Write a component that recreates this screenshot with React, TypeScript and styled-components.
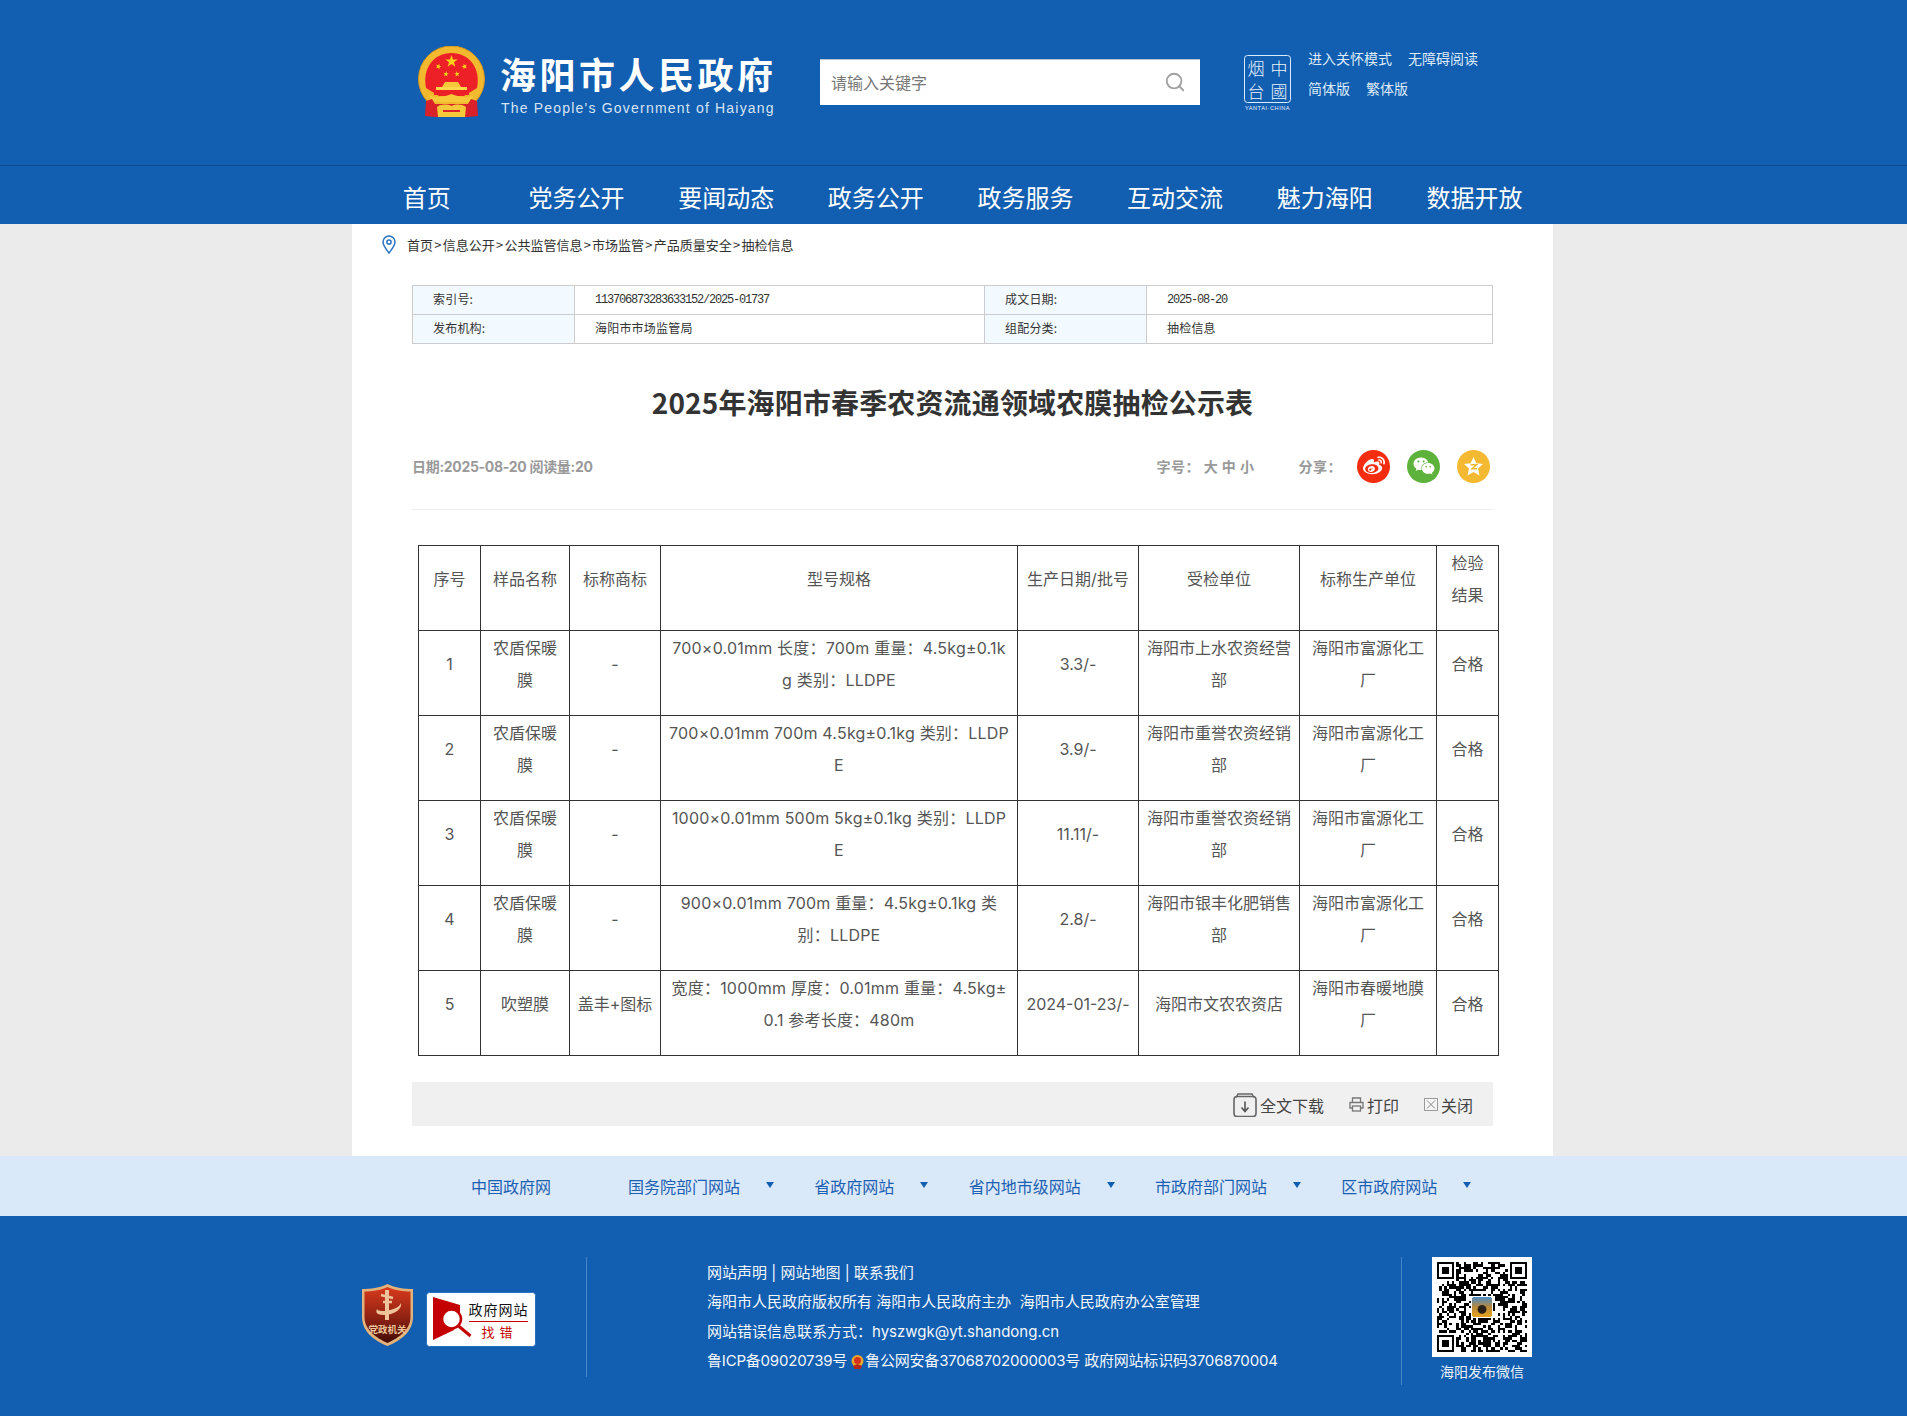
import * as React from "react";
import styled, { createGlobalStyle } from "styled-components";
import { Search } from "lucide-react";
import { FaWeibo, FaWeixin } from "react-icons/fa";

const BLUE = "#125eb0";
const CJK = `"Noto Sans CJK SC", "Liberation Sans", sans-serif`;
const MIXED = `Inter, "Noto Sans CJK SC", sans-serif`;

const GlobalStyle = createGlobalStyle`
  html, body { margin: 0; padding: 0; background: #ebebeb; }
  body { font-family: ${CJK}; color: #333; }
  * { box-sizing: border-box; }
  a { color: inherit; text-decoration: none; }
`;

const Wrap = styled.div`
  width: 1201px;
  margin-left: 352px;
`;

/* header */
const HeaderBar = styled.header`
  background: ${BLUE};
`;
const TopRow = styled(Wrap)`
  height: 165px;
  display: flex;
  align-items: flex-start;
  padding-left: 66px;
`;
const TopBorder = styled.div`
  border-bottom: 1px solid #0e4c95;
`;
const LogoGroup = styled.div`
  width: 402px;
  padding-top: 46px;
  display: flex;
`;
const LogoText = styled.div`
  margin-left: 15px;
  color: #fff;
`;
const LogoTitle = styled.div`
  font-size: 36px;
  font-weight: 700;
  letter-spacing: 3.5px;
  line-height: 44px;
  margin-top: 5px;
  white-space: nowrap;
`;
const LogoSub = styled.div`
  font-family: "Liberation Sans", sans-serif;
  font-size: 14px;
  line-height: 18px;
  margin: 4px 0 0 1px;
  letter-spacing: 1.2px;
  color: #d6e5f5;
  white-space: nowrap;
`;
const SearchBox = styled.div`
  width: 380px;
  height: 46px;
  margin-top: 59px;
  background: #fff;
  border-top: 1px solid #b9c4d2;
  display: flex;
  align-items: center;
  justify-content: space-between;
  padding: 0 14px 2px 11px;
  font-size: 16px;
  color: #777;
`;
const Seal = styled.svg`
  margin: 55px 0 0 44px;
  flex: none;
`;
const TopLinks = styled.div`
  margin: 47px 0 0 17px;
  display: grid;
  grid-auto-rows: 30px;
  font-size: 14px;
  line-height: 22px;
  color: #dcebfa;
  white-space: nowrap;
`;
const LinkPair = styled.div`
  display: flex;
  gap: 16px;
`;
const NavRow = styled(Wrap)`
  height: 58px;
  display: flex;
`;
const NavItem = styled.a`
  width: 149.66px;
  text-align: center;
  font-size: 24px;
  line-height: 50px;
  padding-top: 6px;
  color: #fff;
  white-space: nowrap;
`;

/* main */
const Main = styled(Wrap)`
  background: #fff;
  padding-bottom: 30px;
`;
const Crumbs = styled.div`
  height: 42px;
  padding: 10px 0 0 30px;
  display: flex;
  align-items: flex-start;
  font-size: 13px;
  line-height: 22px;
  color: #333;
  white-space: nowrap;
`;
const CrumbText = styled.span`
  margin-left: 11px;
`;
const Sep = styled.span`
  display: inline-block;
  width: 9.7px;
  text-align: center;
`;
const Content = styled.div`
  padding: 0 60px;
  margin-top: 19px;
`;
const InfoTable = styled.table`
  width: 1080px;
  border-collapse: collapse;
  table-layout: fixed;
  font-size: 12px;
`;
const InfoCell = styled.td<{ $label?: boolean; $mono?: boolean }>`
  height: 29px;
  border: 1px solid #ccc;
  padding: 0 0 3px 20px;
  color: #333;
  letter-spacing: 0.2px;
  background: ${(p) => (p.$label ? "#f3faff" : "#fff")};
  ${(p) =>
    p.$mono
      ? `font-family: "Liberation Mono", monospace; font-size: 12px; letter-spacing: -1.2px; padding-bottom: 1px;`
      : ""}
`;
const Title = styled.h1`
  margin: 38px 0 0;
  font-size: 28px;
  line-height: 40px;
  font-weight: 700;
  letter-spacing: 0.15px;
  text-align: center;
  color: #333;
`;
const MetaRow = styled.div`
  margin-top: 28px;
  padding-bottom: 27px;
  height: 60px;
  border-bottom: 1px solid #eee;
  display: flex;
  align-items: center;
  color: #999;
  font-weight: 700;
`;
const MetaLeft = styled.div`
  font-family: ${MIXED};
  font-size: 14px;
  letter-spacing: -0.3px;
  margin-right: auto;
`;
const MetaTool = styled.div<{ $gap: number }>`
  font-size: 14px;
  letter-spacing: 0.5px;
  margin-right: ${(p) => p.$gap}px;
  white-space: nowrap;
`;
const ShareIcon = styled.a<{ $bg: string }>`
  width: 33px;
  height: 33px;
  border-radius: 50%;
  background: ${(p) => p.$bg};
  color: #fff;
  display: flex;
  align-items: center;
  justify-content: center;
  margin-left: 17px;
  &:first-of-type { margin-left: 0; }
`;
const ShareEnd = styled.div`
  width: 3px;
`;
const DataTable = styled.table`
  width: 1080px;
  margin: 35px 0 0 6px;
  border-collapse: collapse;
  table-layout: fixed;
`;
const Cell = styled.td<{ $spec?: boolean }>`
  height: 85px;
  border: 1px solid #333;
  padding: 1px 5px 19px;
  font-family: ${MIXED};
  font-size: 16px;
  line-height: 32px;
  letter-spacing: ${(p) => (p.$spec ? "0.2px" : "0")};
  color: #555;
  text-align: center;
  vertical-align: middle;
  white-space: pre-line;
  word-break: break-all;
`;
const ActionBar = styled.div`
  margin-top: 26px;
  height: 44px;
  background: #f0f0f0;
  display: flex;
  align-items: center;
  justify-content: flex-end;
  padding: 1px 20px 0 0;
  font-size: 16px;
  color: #444;
`;
const Action = styled.a<{ $gap: number }>`
  display: flex;
  align-items: center;
  gap: 3px;
  margin-left: ${(p) => p.$gap}px;
`;

/* links band */
const Band = styled.div`
  background: #d9e9fa;
`;
const BandRow = styled(Wrap)`
  height: 60px;
  padding-left: 119px;
  display: flex;
  align-items: center;
  font-size: 16px;
  color: #1d60b0;
  white-space: nowrap;
`;
const BandLink = styled.a<{ $gap: number }>`
  display: flex;
  align-items: center;
  margin-right: ${(p) => p.$gap}px;
`;
const Caret = styled.i`
  width: 0;
  height: 0;
  margin: -3px 0 0 26px;
  border-style: solid;
  border-width: 6px 4px 0;
  border-color: #125eb0 transparent transparent;
`;

/* footer */
const FooterBar = styled.footer`
  background: ${BLUE};
  height: 200px;
`;
const FooterRow = styled(Wrap)`
  display: flex;
  align-items: flex-start;
  padding-top: 41px;
`;
const BadgeCol = styled.div`
  width: 235px;
  height: 120px;
  padding: 27px 0 0 10px;
  display: flex;
  align-items: flex-start;
  border-right: 1px solid #4a85c6;
`;
const ErrorBadge = styled.svg`
  margin: 8px 0 0 13px;
`;
const FootText = styled.div`
  width: 815px;
  height: 128px;
  padding: 1px 0 0 120px;
  border-right: 1px solid #4a85c6;
  font-family: ${MIXED};
  font-size: 15px;
  line-height: 29.3px;
  color: #f2f7fc;
  white-space: nowrap;
`;
const RecordLine = styled.div`
  letter-spacing: -0.2px;
`;
const PoliceIcon = styled.svg`
  vertical-align: -3px;
  margin: 0 1px 0 4px;
`;
const QrCol = styled.div`
  margin-left: 30px;
  width: 100px;
  text-align: center;
`;
const QrCaption = styled.div`
  font-size: 14px;
  line-height: 20px;
  margin-top: 4px;
  color: #eaf3fc;
  white-space: nowrap;
`;
const QrFrame = styled.svg`
  display: block;
`;

const navItems = ["首页", "党务公开", "要闻动态", "政务公开", "政务服务", "互动交流", "魅力海阳", "数据开放"];
const crumbs = ["首页", "信息公开", "公共监管信息", "市场监管", "产品质量安全", "抽检信息"];
const headers = ["序号", "样品名称", "标称商标", "型号规格", "生产日期/批号", "受检单位", "标称生产单位", "检验\n结果"];
const colWidths = [62, 89, 91, 357, 121, 161, 137, 62];
const rows = [
  ["1", "农盾保暖\n膜", "-", "700×0.01mm 长度：700m 重量：4.5kg±0.1k\ng 类别：LLDPE", "3.3/-", "海阳市上水农资经营\n部", "海阳市富源化工\n厂", "合格"],
  ["2", "农盾保暖\n膜", "-", "700×0.01mm 700m 4.5kg±0.1kg 类别：LLDP\nE", "3.9/-", "海阳市重誉农资经销\n部", "海阳市富源化工\n厂", "合格"],
  ["3", "农盾保暖\n膜", "-", "1000×0.01mm 500m 5kg±0.1kg 类别：LLDP\nE", "11.11/-", "海阳市重誉农资经销\n部", "海阳市富源化工\n厂", "合格"],
  ["4", "农盾保暖\n膜", "-", "900×0.01mm 700m 重量：4.5kg±0.1kg 类\n别：LLDPE", "2.8/-", "海阳市银丰化肥销售\n部", "海阳市富源化工\n厂", "合格"],
  ["5", "吹塑膜", "盖丰+图标", "宽度：1000mm 厚度：0.01mm 重量：4.5kg±\n0.1 参考长度：480m", "2024-01-23/-", "海阳市文农农资店", "海阳市春暖地膜\n厂", "合格"],
];
const bandLinks: [string, number, boolean][] = [
  ["中国政府网", 77, false],
  ["国务院部门网站", 40.3, true],
  ["省政府网站", 40.3, true],
  ["省内地市级网站", 40.3, true],
  ["市政府部门网站", 40.3, true],
  ["区市政府网站", 0, true],
];

// not a real code, only looks like the one in the picture
function buildQrPath(): string {
  const n = 37;
  let seed = 20250820;
  const next = () => {
    seed = (seed * 1664525 + 1013904223) >>> 0;
    return seed / 4294967296;
  };
  const inFinder = (x: number, y: number, ox: number, oy: number) =>
    x >= ox && x < ox + 8 && y >= oy && y < oy + 8;
  let d = "";
  for (let y = 0; y < n; y++) {
    for (let x = 0; x < n; x++) {
      if (inFinder(x, y, 0, 0) || inFinder(x, y, 29, 0) || inFinder(x, y, 0, 29)) continue;
      if (next() < 0.52) d += `M${x} ${y}h1v1h-1z`;
    }
  }
  const finder = (ox: number, oy: number) =>
    `M${ox} ${oy}h7v7h-7zM${ox + 1} ${oy + 1}v5h5v-5zM${ox + 2} ${oy + 2}h3v3h-3z`;
  return d + finder(0, 0) + finder(30, 0) + finder(0, 30);
}

const Star = ({ cx, cy, r, rot = 0 }: { cx: number; cy: number; r: number; rot?: number }) => {
  const pts: string[] = [];
  for (let i = 0; i < 10; i++) {
    const a = (Math.PI / 5) * i - Math.PI / 2 + rot;
    const rr = i % 2 ? r * 0.4 : r;
    pts.push(`${(cx + rr * Math.cos(a)).toFixed(2)},${(cy + rr * Math.sin(a)).toFixed(2)}`);
  }
  return <polygon points={pts.join(" ")} fill="#fcd116" />;
};

const Emblem = () => (
  <svg width="67" height="72" viewBox="0 0 67 72" style={{ flex: "none" }}>
    <circle cx="33.5" cy="33" r="33" fill="#f2b92e" />
    <circle cx="33.5" cy="33" r="33" fill="none" stroke="#d8951a" strokeWidth="1" />
    <path d="M8 42C4 22 16 7 33.5 7S63 22 59 42L46 50H21Z" fill="#ee2027" />
    <Star cx={33.5} cy={15.5} r={6.5} />
    <Star cx={20.5} cy={20.5} r={3} rot={0.3} />
    <Star cx={28} cy={28} r={3} rot={0.15} />
    <Star cx={39} cy={28} r={3} rot={-0.15} />
    <Star cx={46.5} cy={20.5} r={3} rot={-0.3} />
    <path d="M24 41l3-5h13l3 5z" fill="#f6c93a" />
    <rect x="18" y="41" width="31" height="3" fill="#fbd84b" />
    <path d="M16 44h35v5H16z" fill="#ee2027" />
    <path d="M11 49c6 4 15 2 22.500-1 7.500 3 16 5 22.500 1l-3 7H14z" fill="#f6c93a" />
    <path d="M8 55l6-2 3 5h33l3-5 6 2 1 15-10 1H17L7 70z" fill="#d9212a" />
    <path d="M19 61c4-3 10-3 14.500-1 4.500-2 10-2 14.500 1l-1 10H20z" fill="#f6c93a" />
    <path d="M25 64h17v2H25z" fill="#d9212a" />
  </svg>
);

const SealMark = () => (
  <Seal width="47" height="56" viewBox="0 0 47 56">
    <rect x="0.5" y="0.5" width="46" height="47" rx="3" fill="none" stroke="#dcebfa" strokeWidth="1" />
    <g fill="#eaf3fc" fontFamily={CJK} textAnchor="middle" fontWeight="300">
      <text x="12" y="20" fontSize="17">烟</text>
      <text x="35" y="20" fontSize="17">中</text>
      <text x="12" y="43" fontSize="17">台</text>
      <text x="35" y="43" fontSize="17">國</text>
      <text x="23.5" y="55" fontSize="5.6" letterSpacing="0.55" fontFamily="Liberation Sans, sans-serif">YANTAI·CHINA</text>
    </g>
  </Seal>
);

const PinIcon = () => (
  <svg width="14" height="19" viewBox="0 0 14 19" style={{ flex: "none", marginTop: 1 }}>
    <path d="M7 18C4 14 1 10.5 1 7a6 6 0 0 1 12 0c0 3.5-3 7-6 11z" fill="none" stroke="#2a72c4" strokeWidth="1.5" />
    <circle cx="7" cy="7" r="2.1" fill="none" stroke="#2a72c4" strokeWidth="1.5" />
  </svg>
);

const FavIcon = () => (
  <svg width="21" height="21" viewBox="0 0 21 21">
    <polygon
      points="10.5,1 13.3,7.3 20,8 15,12.6 16.5,19.5 10.5,16 4.5,19.5 6,12.6 1,8 7.7,7.3"
      fill="#fff"
    />
    <path d="M7.5 8.8h6l-4.5 4h5" fill="none" stroke="#f4b930" strokeWidth="1.5" />
  </svg>
);

const DownloadIcon = () => (
  <svg width="24" height="24" viewBox="0 0 24 24">
    <path d="M3 4.5L5 1h14l2 3.5" fill="none" stroke="#666" strokeWidth="1.5" />
    <rect x="1" y="3.5" width="22" height="20" rx="3" fill="none" stroke="#666" strokeWidth="1.6" />
    <path d="M12 8.5v9M8.5 14.5l3.5 4 3.5-4" fill="none" stroke="#555" strokeWidth="1.6" />
  </svg>
);

const PrintIcon = () => (
  <svg width="15" height="15" viewBox="0 0 15 15">
    <path d="M3.5 5V1h8v4M3.5 11H1V5.5h13V11h-2.500" fill="none" stroke="#777" strokeWidth="1.300" />
    <rect x="3.500" y="9" width="8" height="5" fill="none" stroke="#777" strokeWidth="1.300" />
  </svg>
);

const CloseIcon = () => (
  <svg width="14" height="13" viewBox="0 0 14 13">
    <rect x="0.500" y="0.500" width="13" height="12" fill="#f6f6f6" stroke="#999" />
    <path d="M3 2.500l8 8M11 2.500l-8 8" stroke="#888" strokeWidth="1" />
  </svg>
);

const PartyShield = () => (
  <svg width="51" height="62" viewBox="0 0 51 62" style={{ flex: "none" }}>
    <defs>
      <linearGradient id="shieldFill" x1="0" y1="0" x2="0" y2="1">
        <stop offset="0" stopColor="#d93a1c" />
        <stop offset="0.55" stopColor="#8e2213" />
        <stop offset="1" stopColor="#3f0b05" />
      </linearGradient>
    </defs>
    <path d="M25.500 0C18 4 8 5 0 5v28c0 15 13 24 25.500 29C38 57 51 48 51 33V5C43 5 33 4 25.500 0z" fill="#e2b27a" />
    <path d="M25.500 3C18 6.500 9 7.500 2.500 7.500V33c0 13 12 21 23 26 11-5 23-13 23-26V7.500C42 7.500 33 6.500 25.500 3z" fill="url(#shieldFill)" />
    <path d="M25 6v30" stroke="#eec49a" strokeWidth="4" fill="none" />
    <path d="M19 11l12 3M21 18h9" stroke="#eec49a" strokeWidth="2.500" fill="none" />
    <path d="M15 25c-3 6 5 7 14 5 7-2 11-7 10-11-2 5-9 7-16 8-4 0-7 0-8-2z" fill="#eec49a" />
    <text x="25.500" y="49" fontSize="9.500" fontWeight="700" fill="#eec49a" textAnchor="middle" fontFamily={CJK}>党政机关</text>
  </svg>
);

const FindError = () => (
  <ErrorBadge width="110" height="55" viewBox="0 0 110 55">
    <rect x="0.500" y="0.500" width="109" height="54" rx="3" fill="#fff" stroke="#2a6fc0" strokeWidth="1" />
    <path d="M7 5l27 8v8l-6 17-21 10z" fill="#c40000" />
    <circle cx="25.500" cy="27" r="9.500" fill="#fff" stroke="#c40000" strokeWidth="2.500" />
    <path d="M32.500 34l12 10" stroke="#c40000" strokeWidth="3" />
    <g fontFamily={CJK} textAnchor="middle">
      <text x="72.500" y="23" fontSize="14" letterSpacing="1" fill="#111">政府网站</text>
      <text x="73.500" y="45" fontSize="13" letterSpacing="5" fill="#c40000">找错</text>
    </g>
    <rect x="43" y="29" width="59" height="1" fill="#c40000" />
  </ErrorBadge>
);

const QrCode = () => {
  const d = React.useMemo(buildQrPath, []);
  return (
    <QrFrame width="100" height="100" viewBox="-2 -2 41 41" shapeRendering="crispEdges">
      <defs>
        <linearGradient id="qrLogo" x1="0" y1="0" x2="0" y2="1">
          <stop offset="0" stopColor="#4f8cc4" />
          <stop offset="0.5" stopColor="#b78a3c" />
          <stop offset="1" stopColor="#e6a21c" />
        </linearGradient>
      </defs>
      <rect x="-2" y="-2" width="41" height="41" fill="#fff" />
      <path d={d} fill="#000" fillRule="evenodd" />
      <rect x="14" y="14" width="9" height="9" fill="#fff" />
      <rect x="14.500" y="14.500" width="8" height="8" rx="0.800" fill="url(#qrLogo)" />
      <circle cx="18.500" cy="19.500" r="1.800" fill="#2b2018" shapeRendering="auto" />
    </QrFrame>
  );
};

const App: React.FC = () => (
  <>
    <GlobalStyle />
    <HeaderBar>
      <TopBorder>
        <TopRow>
          <LogoGroup>
            <Emblem />
            <LogoText>
              <LogoTitle>海阳市人民政府</LogoTitle>
              <LogoSub>The People's Government of Haiyang</LogoSub>
            </LogoText>
          </LogoGroup>
          <SearchBox>
            请输入关键字
            <Search size={22} color="#a0a0a0" strokeWidth={2} />
          </SearchBox>
          <SealMark />
          <TopLinks>
            <LinkPair>
              <a>进入关怀模式</a>
              <a>无障碍阅读</a>
            </LinkPair>
            <LinkPair>
              <a>简体版</a>
              <a>繁体版</a>
            </LinkPair>
          </TopLinks>
        </TopRow>
      </TopBorder>
      <NavRow>
        {navItems.map((n) => (
          <NavItem key={n}>{n}</NavItem>
        ))}
      </NavRow>
    </HeaderBar>

    <Main>
      <Crumbs>
        <PinIcon />
        <CrumbText>
          {crumbs.map((c, i) => (
            <React.Fragment key={c}>
              {i > 0 && <Sep>&gt;</Sep>}
              {c}
            </React.Fragment>
          ))}
        </CrumbText>
      </Crumbs>
      <Content>
        <InfoTable>
          <colgroup>
            <col width="162" />
            <col width="410" />
            <col width="162" />
            <col width="346" />
          </colgroup>
          <tbody>
            <tr>
              <InfoCell $label>索引号:</InfoCell>
              <InfoCell $mono>113706873283633152/2025-01737</InfoCell>
              <InfoCell $label>成文日期:</InfoCell>
              <InfoCell $mono>2025-08-20</InfoCell>
            </tr>
            <tr>
              <InfoCell $label>发布机构:</InfoCell>
              <InfoCell>海阳市市场监管局</InfoCell>
              <InfoCell $label>组配分类:</InfoCell>
              <InfoCell>抽检信息</InfoCell>
            </tr>
          </tbody>
        </InfoTable>

        <Title>2025年海阳市春季农资流通领域农膜抽检公示表</Title>

        <MetaRow>
          <MetaLeft>日期:2025-08-20 阅读量:20</MetaLeft>
          <MetaTool $gap={44}>字号： 大 中 小</MetaTool>
          <MetaTool $gap={15}>分享：</MetaTool>
          <ShareIcon $bg="#f42c10">
            <FaWeibo size={22} />
          </ShareIcon>
          <ShareIcon $bg="#5cb23a">
            <FaWeixin size={22} />
          </ShareIcon>
          <ShareIcon $bg="#f4b930">
            <FavIcon />
          </ShareIcon>
          <ShareEnd />
        </MetaRow>

        <DataTable>
          <colgroup>
            {colWidths.map((w, i) => (
              <col key={i} width={w} />
            ))}
          </colgroup>
          <tbody>
            <tr>
              {headers.map((h) => (
                <Cell key={h}>{h}</Cell>
              ))}
            </tr>
            {rows.map((r) => (
              <tr key={r[0]}>
                {r.map((v, i) => (
                  <Cell key={i} $spec={i === 3}>
                    {v}
                  </Cell>
                ))}
              </tr>
            ))}
          </tbody>
        </DataTable>

        <ActionBar>
          <Action $gap={0}>
            <DownloadIcon />
            全文下载
          </Action>
          <Action $gap={25}>
            <PrintIcon />
            打印
          </Action>
          <Action $gap={25}>
            <CloseIcon />
            关闭
          </Action>
        </ActionBar>
      </Content>
    </Main>

    <Band>
      <BandRow>
        {bandLinks.map(([label, gap, hasCaret]) => (
          <BandLink key={label} $gap={gap}>
            {label}
            {hasCaret && <Caret />}
          </BandLink>
        ))}
      </BandRow>
    </Band>

    <FooterBar>
      <FooterRow>
        <BadgeCol>
          <PartyShield />
          <FindError />
        </BadgeCol>
        <FootText>
          <div>网站声明 | 网站地图 | 联系我们</div>
          <div>海阳市人民政府版权所有 海阳市人民政府主办&nbsp; 海阳市人民政府办公室管理</div>
          <div>网站错误信息联系方式：hyszwgk@yt.shandong.cn</div>
          <RecordLine>
            鲁ICP备09020739号
            <PoliceIcon width="13" height="15" viewBox="0 0 13 15">
              <circle cx="6.500" cy="7" r="6" fill="#e8a92c" />
              <circle cx="6.500" cy="6.500" r="3.500" fill="#d7301f" />
              <path d="M2 12l4.500-2 4.500 2-1.500 3h-6z" fill="#b5261a" />
            </PoliceIcon>
            鲁公网安备37068702000003号 政府网站标识码3706870004
          </RecordLine>
        </FootText>
        <QrCol>
          <QrCode />
          <QrCaption>海阳发布微信</QrCaption>
        </QrCol>
      </FooterRow>
    </FooterBar>
  </>
);

export default App;
